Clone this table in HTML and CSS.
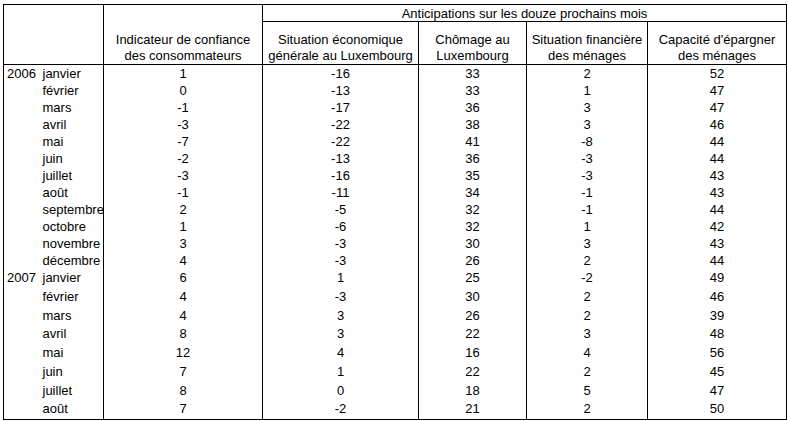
FILE: index.html
```html
<!DOCTYPE html>
<html lang="fr">
<head>
<meta charset="utf-8">
<title>Confiance des consommateurs</title>
<link rel="stylesheet" href="styles.css">
</head>
<body>
<table class="grid">
  <colgroup>
    <col class="c-year">
    <col class="c-month">
    <col class="c-ind">
    <col class="c-sit">
    <col class="c-cho">
    <col class="c-fin">
    <col class="c-cap">
  </colgroup>
  <thead>
    <tr class="h1">
      <th colspan="2" rowspan="2" class="corner"></th>
      <th rowspan="2" class="hcol">Indicateur de confiance<br>des consommateurs</th>
      <th colspan="4" class="group">Anticipations sur les douze prochains mois</th>
    </tr>
    <tr class="h2">
      <th class="hcol">Situation économique<br>générale au Luxembourg</th>
      <th class="hcol">Chômage au<br>Luxembourg</th>
      <th class="hcol">Situation financière<br>des ménages</th>
      <th class="hcol">Capacité d'épargner<br>des ménages</th>
    </tr>
  </thead>
  <tbody class="y2006">
    <tr><td class="yr">2006</td><td class="mo">janvier</td><td>1</td><td>-16</td><td>33</td><td>2</td><td>52</td></tr>
    <tr><td class="yr"></td><td class="mo">février</td><td>0</td><td>-13</td><td>33</td><td>1</td><td>47</td></tr>
    <tr><td class="yr"></td><td class="mo">mars</td><td>-1</td><td>-17</td><td>36</td><td>3</td><td>47</td></tr>
    <tr><td class="yr"></td><td class="mo">avril</td><td>-3</td><td>-22</td><td>38</td><td>3</td><td>46</td></tr>
    <tr><td class="yr"></td><td class="mo">mai</td><td>-7</td><td>-22</td><td>41</td><td>-8</td><td>44</td></tr>
    <tr><td class="yr"></td><td class="mo">juin</td><td>-2</td><td>-13</td><td>36</td><td>-3</td><td>44</td></tr>
    <tr><td class="yr"></td><td class="mo">juillet</td><td>-3</td><td>-16</td><td>35</td><td>-3</td><td>43</td></tr>
    <tr><td class="yr"></td><td class="mo">août</td><td>-1</td><td>-11</td><td>34</td><td>-1</td><td>43</td></tr>
    <tr><td class="yr"></td><td class="mo">septembre</td><td>2</td><td>-5</td><td>32</td><td>-1</td><td>44</td></tr>
    <tr><td class="yr"></td><td class="mo">octobre</td><td>1</td><td>-6</td><td>32</td><td>1</td><td>42</td></tr>
    <tr><td class="yr"></td><td class="mo">novembre</td><td>3</td><td>-3</td><td>30</td><td>3</td><td>43</td></tr>
    <tr><td class="yr"></td><td class="mo">décembre</td><td>4</td><td>-3</td><td>26</td><td>2</td><td>44</td></tr>
  </tbody>
  <tbody class="y2007">
    <tr><td class="yr">2007</td><td class="mo">janvier</td><td>6</td><td>1</td><td>25</td><td>-2</td><td>49</td></tr>
    <tr><td class="yr"></td><td class="mo">février</td><td>4</td><td>-3</td><td>30</td><td>2</td><td>46</td></tr>
    <tr><td class="yr"></td><td class="mo">mars</td><td>4</td><td>3</td><td>26</td><td>2</td><td>39</td></tr>
    <tr><td class="yr"></td><td class="mo">avril</td><td>8</td><td>3</td><td>22</td><td>3</td><td>48</td></tr>
    <tr><td class="yr"></td><td class="mo">mai</td><td>12</td><td>4</td><td>16</td><td>4</td><td>56</td></tr>
    <tr><td class="yr"></td><td class="mo">juin</td><td>7</td><td>1</td><td>22</td><td>2</td><td>45</td></tr>
    <tr><td class="yr"></td><td class="mo">juillet</td><td>8</td><td>0</td><td>18</td><td>5</td><td>47</td></tr>
    <tr><td class="yr"></td><td class="mo">août</td><td>7</td><td>-2</td><td>21</td><td>2</td><td>50</td></tr>
  </tbody>
</table>
</body>
</html>
```

FILE: styles.css
```css
html, body {
  margin: 0;
  padding: 0;
  background: #ffffff;
}

body {
  padding: 4px 0 0 3px;
  font-family: "Liberation Sans", Arial, sans-serif;
  font-size: 13px;
  color: #000000;
}

.grid {
  border-collapse: collapse;
  table-layout: fixed;
  width: 783px;
  border: 1px solid #000;
}

.c-year { width: 38px; }
.c-month { width: 62px; }
.c-ind { width: 159px; }
.c-sit { width: 156px; }
.c-cho { width: 108px; }
.c-fin { width: 121px; }
.c-cap { width: 139px; }

.grid th {
  font-weight: normal;
  padding: 0;
}

.grid td.mo ~ td {
  border-left: 1px solid #000;
}

.h1 { height: 17px; }
.h2 { height: 43px; }

.group {
  text-align: center;
  vertical-align: middle;
  line-height: 15px;
  border-bottom: 1px solid #000;
  border-left: 1px solid #000;
}

.hcol {
  text-align: center;
  vertical-align: bottom;
  line-height: 16px;
  border-left: 1px solid #000;
  border-bottom: 1px solid #000;
}

.corner {
  border-bottom: 1px solid #000;
}

.grid td {
  padding: 0;
  text-align: center;
  white-space: nowrap;
}

.y2006 tr { height: 17px; }
.y2006 td { line-height: 17px; }

.y2007 tr { height: 18.75px; }
.y2007 td { line-height: 18.75px; }

.grid td.yr {
  text-align: left;
  padding-left: 3px;
}

.grid td.mo {
  text-align: left;
  padding-left: 1px;
  overflow: visible;
}
```
